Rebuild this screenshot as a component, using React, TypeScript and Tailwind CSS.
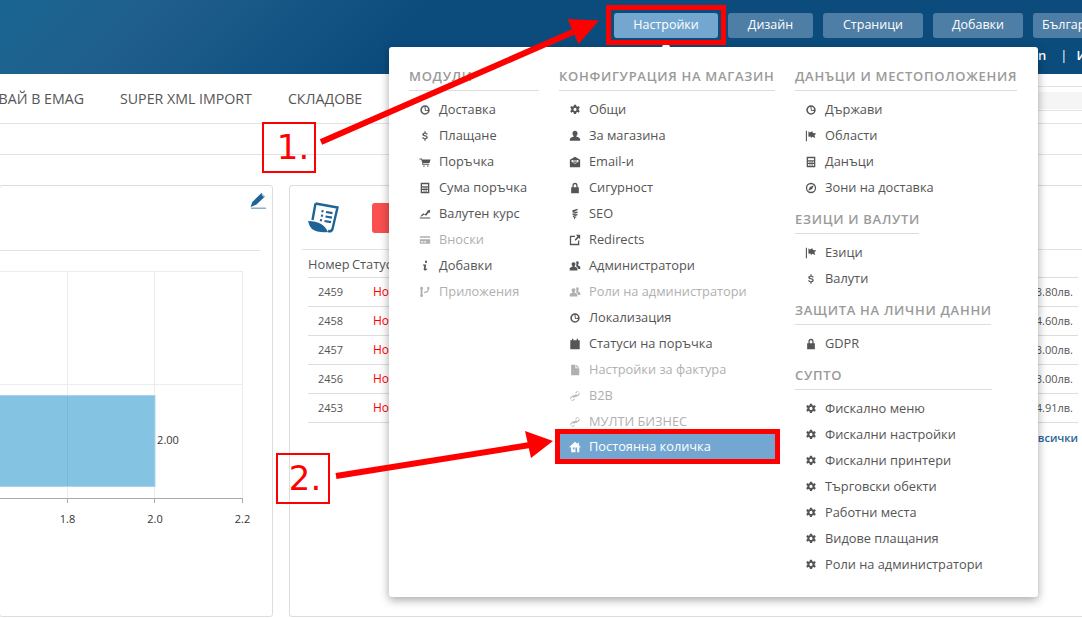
import type { ReactNode } from "react";

// small glyph-like icons, all on a 14x14 box
const icons: Record<string, ReactNode> = {
  globe: (
    <path
      fillRule="evenodd"
      d="M7 1.500a5.500 5.500 0 1 0 0 11 5.500 5.500 0 0 0 0-11zM7.500 3.200a3.800 3.800 0 0 1 3.300 3.200L8 7.500zM6.300 3.300l.7 5 3.700 0A3.800 3.800 0 1 1 6.300 3.300z"
    />
  ),
  dollar: (
    <path d="M3.800 5.200C3.800 3.800 5.100 3.200 6.300 3.100V1.500h1.400v1.600c1.300.1 2.400.7 2.500 2.100H8.700c-.1-.6-.8-.9-1.700-.9-.9 0-1.600.3-1.600.8 0 .6.700.7 1.800 1 1.600.3 3 .8 3 2.500 0 1.500-1.300 2.100-2.500 2.200v1.700H6.300v-1.700C5 10.600 3.800 10 3.700 8.400h1.500c.1.700.8 1.100 1.800 1.100 1 0 1.700-.4 1.700-1s-.7-.8-1.800-1.100C5.300 7.100 3.800 6.800 3.800 5.200z" />
  ),
  cart: (
    <path d="M.500 3h2.800l.4 1.200H13.500l-1.400 4.300H5l-.2.800h7v1H3.500l.5-2L2.500 4H.500z M5 11h1.500v1.500H5z M9.500 11H11v1.500H9.500z" />
  ),
  calc: (
    <path
      fillRule="evenodd"
      d="M2 1h10v12H2zM3.500 2.500v2.500h7V2.500zM3.500 6.500V8h2V6.500zm2.700 0V8h1.600V6.500zm2.500 0V8h1.800V6.500zM3.500 9.300v2h2v-2zm2.700 0v2h1.600v-2zm2.500 0v2h1.800v-2z"
    />
  ),
  chart: <path d="M1 11h12v1.300H1zM1.500 9.500l3.500-3.500 2 1.300 3-3.300-1.200-.6L13 2l-.3 4-1-.9-3.500 4-2.200-1.400-3 2.200z" />,
  card: (
    <path
      fillRule="evenodd"
      d="M1 2.500h12v9H1zM1 4.500v1.500h12V4.500zM2.500 8.500v1.500h2.500V8.500zm3.500 0v1.500h2V8.500z"
    />
  ),
  info: (
    <path d="M7 1h2.300v2.300H7zM4.800 5.300h3.600l-.8 4.700c0 .5.800.4 1.600-.3l.5.700c-1.200 1.400-2.200 1.800-3.200 1.700-1-.2-1.100-1-.9-2l.5-3.500H4.800z" />
  ),
  fork: (
    <path d="M3 1a1.700 1.700 0 0 1 1.100 3v5.800a1.700 1.700 0 1 1-2.200 0V4A1.700 1.700 0 0 1 3 1zM10.500 1a1.700 1.700 0 0 1 1.100 3c0 2.600-2.100 3.600-5.600 4.600V7c2.500-.7 4.200-1.400 4.500-2.900A1.700 1.700 0 0 1 10.500 1z" />
  ),
  gear: (
    <path
      fillRule="evenodd"
      d="M5.800 1h2.400l.4 1.700 1.300.6 1.500-.9 1.200 2-1.300 1.100v1.500l1.300 1.100-1.200 2-1.500-.9-1.300.6L8.200 11.600H5.800l-.4-1.700-1.300-.6-1.500.9-1.200-2 1.300-1.100V5.600L1.400 4.400l1.200-2 1.500.9 1.300-.6zM7 4.500a1.800 1.800 0 1 0 0 3.600 1.800 1.800 0 0 0 0-3.600z"
    />
  ),
  user: (
    <path d="M7 1c1.800 0 2.900 1.200 2.900 3 0 1.300-.6 2.400-1.300 3v1c2.200.5 4.400 1.200 4.400 3.100V12.500H1V11.100c0-1.900 2.200-2.600 4.400-3.100V7C4.700 6.400 4.100 5.300 4.100 4 4.100 2.200 5.200 1 7 1z" />
  ),
  mail: (
    <path
      fillRule="evenodd"
      d="M7 1l6 3.500v8.500H1V4.500zM3 4.800v2L7 9l4-2.200v-2zM4.500 5.300h5v.9h-5zm0 1.400h5v.3L7 8.200 4.500 7z"
    />
  ),
  lock: (
    <path
      fillRule="evenodd"
      d="M7 1A3 3 0 0 1 10 4V6h1.500v7h-9V6H4V4a3 3 0 0 1 3-3zM5.500 4V6h3V4a1.500 1.500 0 0 0-3 0z"
    />
  ),
  seo: <path d="M4 2.500l6-1.500v1.500L5.500 4l4.500.5v1.200L4.500 7l5.500.3v1.200L5 9.800l3.500.2v1l-1.500.4V13H6v-1.800L4.500 10.500V9l2.600-.6L4 8V6.500l3-.8L4 5z" />,
  external: (
    <path d="M1 2H7v1.500H2.500v8h8V7.500H12V13H1zM8 1h5v5l-1.700-1.700L7.800 8 6.500 6.700 9.900 3z" />
  ),
  users: (
    <path d="M5.500 2.500c1.300 0 2 .9 2 2.200 0 1-.4 1.800-1 2.300v.8c1.800.4 3.300 1 3.300 2.400v2H.800v-2c0-1.400 1.500-2 3.200-2.400V7c-.6-.5-1-1.300-1-2.300 0-1.300.9-2.200 2.500-2.200zM9.500 1.500c1.200 0 1.900.8 1.900 2 0 .9-.4 1.600-.9 2.100V6.300c1.500.4 2.700.9 2.700 2.200v2h-2.400C10.300 8.700 9.400 7.800 8.300 7.300c.3-.8.400-1.700.2-2.500.2-.7.300-1.600-.3-2.300.3-.6.800-1 1.300-1z" />
  ),
  clipboard: <path d="M1.500 2.500h2V1h1.500v1.500h4V1h1.500v1.500h2V13h-11z" />,
  file: <path d="M2.500 1h5v4h4.500v8h-9.500zM8.500 1l3.500 3.200H8.500z" />,
  link: (
    <path d="M8.700 1.800a2.700 2.700 0 0 1 3.500 3.500l-1.800 1.800a2.700 2.700 0 0 1-3.600.1l.9-.9c.7.400 1.500.300 2-.2l1.600-1.600a1.400 1.400 0 0 0-2-2L7.800 4l-.4-.9zM5.300 12.200a2.700 2.700 0 0 1-3.500-3.500l1.800-1.800a2.700 2.700 0 0 1 3.600-.1l-.9.9c-.7-.4-1.500-.3-2 .2L2.700 9.500a1.400 1.400 0 0 0 2 2l1.500-1.500.4.900zM4.800 8.300l3.500-3.500.9.9-3.500 3.500z" />
  ),
  home: (
    <path
      fillRule="evenodd"
      d="M7 1l3 2.600V2h1.500v3l2.500 2.300h-2V13H2.500V7.300H0zM4.500 7.500v2.500h2V7.500zm3 0V13h2V7.500z"
    />
  ),
  flag: <path d="M1 1h1.300v12H1zM4 1.500l1.500 1.500L8.500 1.500l.8 2 4 .5-2.300 2.200 1 3-3.500-1.200-1.200 1.200-1-1.500L4 8z" />,
  target: (
    <path
      fillRule="evenodd"
      d="M7 1a6 6 0 1 1 0 12A6 6 0 0 1 7 1zm0 1.500a4.500 4.500 0 1 0 0 9 4.500 4.500 0 0 0 0-9zM10.300 3.700L8.300 8.300 3.700 10.300l2-4.600z"
    />
  ),
};

function Icon({ name }: { name: string }) {
  return (
    <svg viewBox="0 0 14 14" className="h-[12px] w-[12px] fill-current">
      {icons[name]}
    </svg>
  );
}

type Link = { label: string; icon: string; muted?: boolean };

function MenuItem({ label, icon, muted }: Link) {
  return (
    <div className={`flex h-[26px] items-center pl-[10px] ${muted ? "text-[#b0b0b0]" : "text-[#555]"}`}>
      <span className="flex w-[20px] shrink-0">
        <Icon name={icon} />
      </span>
      <span>{label}</span>
    </div>
  );
}

function MenuHeading({ title, width }: { title: string; width: string }) {
  return (
    <div className={`h-[23px] border-b border-[#ddd] text-[13px] leading-[16px] font-semibold tracking-[0.7px] whitespace-nowrap text-[#9a9a9a] ${width}`}>
      {title}
    </div>
  );
}

function MenuSection({ title, width, items, className }: { title: string; width: string; items: Link[]; className?: string }) {
  return (
    <div className={className}>
      <MenuHeading title={title} width={width} />
      <div className="mt-[6px]">
        {items.map((item) => (
          <MenuItem key={item.label} {...item} />
        ))}
      </div>
    </div>
  );
}

const moduleLinks: Link[] = [
  { label: "Доставка", icon: "globe" },
  { label: "Плащане", icon: "dollar" },
  { label: "Поръчка", icon: "cart" },
  { label: "Сума поръчка", icon: "calc" },
  { label: "Валутен курс", icon: "chart" },
  { label: "Вноски", icon: "card", muted: true },
  { label: "Добавки", icon: "info" },
  { label: "Приложения", icon: "fork", muted: true },
];

const shopLinks: Link[] = [
  { label: "Общи", icon: "gear" },
  { label: "За магазина", icon: "user" },
  { label: "Email-и", icon: "mail" },
  { label: "Сигурност", icon: "lock" },
  { label: "SEO", icon: "seo" },
  { label: "Redirects", icon: "external" },
  { label: "Администратори", icon: "users" },
  { label: "Роли на администратори", icon: "users", muted: true },
  { label: "Локализация", icon: "globe" },
  { label: "Статуси на поръчка", icon: "clipboard" },
  { label: "Настройки за фактура", icon: "file", muted: true },
  { label: "B2B", icon: "link", muted: true },
  { label: "МУЛТИ БИЗНЕС", icon: "link", muted: true },
];

const orders = [
  { id: "2459", total: "3.80лв." },
  { id: "2458", total: "4.60лв." },
  { id: "2457", total: "3.00лв." },
  { id: "2456", total: "3.00лв." },
  { id: "2453", total: "4.91лв." },
];

const topButtons = [
  { label: "Дизайн", width: "w-[85px]" },
  { label: "Страници", width: "w-[100px]" },
  { label: "Добавки", width: "w-[90px]" },
];

function BarChart() {
  return (
    <svg viewBox="0 0 272 360" className="h-[360px] w-[272px] text-[11px]">
      <path d="M0 86.500H242.500M0 199.500H242.500M67.500 86V314M154.500 86V314M242.500 86V314" stroke="#ececec" fill="none" />
      <rect x="-2" y="210.500" width="157" height="91" fill="#85c3e3" stroke="#a8d5ec" />
      <path d="M67.500 211V301" stroke="#7ab8d8" />
      <path d="M0 313.500H242.500" stroke="#aaa" fill="none" />
      <path d="M67.500 313V318M154.500 313V318M242.500 313V318" stroke="#aaa" />
      <g fill="#333" fontFamily="'Open Sans', sans-serif" textAnchor="middle">
        <text x="168" y="259">2.00</text>
        <text x="67.500" y="338">1.8</text>
        <text x="155" y="338">2.0</text>
        <text x="242.500" y="338">2.2</text>
      </g>
    </svg>
  );
}

export default function App() {
  return (
    <div className="relative h-[618px] w-[1082px] overflow-hidden bg-white font-['Open_Sans','Noto_Sans',sans-serif] text-[12.8px] text-[#555]">
      {/* top bar */}
      <header className="flex h-[74px] flex-col items-end overflow-hidden bg-[linear-gradient(135deg,#1a6592_0%,#1f5e8c_15%,#0b4c7d_38%,#0b4c7d_100%)] pt-[13px]">
        <div className="flex h-[25px] gap-[10px] text-[12.5px] text-white">
          <button className="w-[104px] rounded-[3px] bg-[#73a7cf]">Настройки</button>
          {topButtons.map((b) => (
            <button key={b.label} className={`${b.width} rounded-[3px] bg-[#4e7ea5]`}>
              {b.label}
            </button>
          ))}
          <button className="w-[49px] overflow-hidden rounded-l-[3px] bg-[#4e7ea5] pl-[9px] text-left whitespace-nowrap">
            Български
          </button>
        </div>
        <div className="mt-[8px] flex w-[44px] overflow-hidden text-[13px] leading-[18px] font-semibold whitespace-nowrap text-white">
          <span>n</span>
          <span className="ml-[14px] font-normal">|</span>
          <span className="ml-[9px]">Изход</span>
        </div>
      </header>

      {/* main nav */}
      <nav className="relative flex h-[50px] items-center gap-[36px] border-b border-[#e3e3e3] text-[14.2px] whitespace-nowrap text-[#555]">
        <span className="-ml-[12px] w-[96px] text-right">ВАЙ В EMAG</span>
        <span>SUPER XML IMPORT</span>
        <span>СКЛАДОВЕ</span>
        <div className="absolute top-[12px] right-0 h-[25px] w-[44px] border-y border-[#e3e3e3] pt-[5px] pb-[1px]">
          <div className="h-full bg-[#f5f5f5]" />
        </div>
      </nav>

      <div className="h-[31px] border-b border-[#e3e3e3]" />

      {/* cards */}
      <main className="flex gap-[16px] pt-[30px]">
        <section className="relative -ml-[1px] h-[432px] w-[274px] shrink-0 rounded-[3px] border border-[#ddd]">
          <div className="absolute top-[64px] right-[12px] left-0 border-b border-[#e3e3e3]" />
          <div className="absolute -top-[1px] left-0">
            <BarChart />
          </div>
          <svg viewBox="0 0 16 16" className="absolute top-[6px] right-[6px] h-[17px] w-[16px] fill-[#1f6496]">
            <path d="M11.500.5l3.500 3.500-8.500 8L.5 14.500l1.800-5zM12 1.500l-.5.5 2.500 2.500.5-.5zM1 15.200h15v.8H1z" />
          </svg>
        </section>

        <section className="flex h-[432px] grow flex-col rounded-l-[3px] border border-r-0 border-[#ddd] pl-[12px]">
          <div className="flex h-[64px] items-center border-b border-[#e3e3e3] pl-[6px]">
            <svg viewBox="0 0 31 31" className="h-[31px] w-[31px]">
              <path d="M7.500 1.500L29.500 5.500L24.500 27Q23.500 30 20 29M7.500 1.500L4.500 18" fill="none" stroke="#1f6496" strokeWidth="2.400" />
              <path d="M0 19Q8 19 13 22Q17 24 20 30Q10 31 4 27Q1 24 0 19Z" fill="#1f6496" />
              <path d="M13.500 9L15.500 9.400M13 13.500L15 13.900M12 18L14 18.400M18 10L24.500 11.200M17.500 14.500L24 15.700M16.500 19L23 20.200" fill="none" stroke="#1f6496" strokeWidth="2.200" />
            </svg>
            <div className="ml-[33px] h-[30px] w-[100px] rounded-[3px] bg-[#fa5050]" />
          </div>
          <div className="mr-[4px] ml-[6px]">
            <div className="flex h-[28px] items-center border-b border-[#ddd] pt-[2px] whitespace-nowrap text-[#555]">
              <span className="w-[44px]">Номер</span>
              <span>Статус</span>
            </div>
            {orders.map((o) => (
              <div key={o.id} className="flex h-[29px] items-center border-b border-[#ddd] text-[11px]">
                <span className="ml-[10px] w-[55px]">{o.id}</span>
                <span className="text-[12px] text-[#f00]">Нова</span>
                <span className="mr-[5px] ml-auto">{o.total}</span>
              </div>
            ))}
            <div className="flex h-[30px] items-center justify-end text-[11px] font-semibold text-[#1f6496]">всички</div>
          </div>
        </section>
      </main>

      {/* dropdown menu */}
      <div className="absolute top-[47px] left-[389px] h-[550px] w-[649px] rounded-[3px] bg-white pt-[21px] pl-[20px] shadow-[0_3px_10px_rgba(0,0,0,0.35)]">
        <div className="absolute -top-[3px] left-[273px] h-[6px] w-[8px] rounded-t-full bg-white" />
        <div className="flex">
          <MenuSection title="МОДУЛИ" width="w-[130px]" items={moduleLinks} className="w-[150px]" />
          <div className="w-[236px]">
            <MenuHeading title="КОНФИГУРАЦИЯ НА МАГАЗИН" width="w-[216px]" />
            <div className="mt-[6px] w-[216px]">
              {shopLinks.map((item) => (
                <MenuItem key={item.label} {...item} />
              ))}
              <div className="-mt-[1px] flex h-[26px] items-center bg-[#73a7d2] pl-[10px] text-white">
                <span className="flex w-[20px] shrink-0">
                  <Icon name="home" />
                </span>
                <span>Постоянна количка</span>
              </div>
            </div>
          </div>
          <div className="w-[222px]">
            <MenuSection
              title="ДАНЪЦИ И МЕСТОПОЛОЖЕНИЯ"
              width="w-[222px]"
              items={[
                { label: "Държави", icon: "globe" },
                { label: "Области", icon: "flag" },
                { label: "Данъци", icon: "calc" },
                { label: "Зони на доставка", icon: "target" },
              ]}
            />
            <MenuSection
              title="ЕЗИЦИ И ВАЛУТИ"
              width="w-[124px]"
              className="mt-[10px]"
              items={[
                { label: "Езици", icon: "flag" },
                { label: "Валути", icon: "dollar" },
              ]}
            />
            <MenuSection
              title="ЗАЩИТА НА ЛИЧНИ ДАННИ"
              width="w-[196px]"
              className="mt-[10px]"
              items={[{ label: "GDPR", icon: "lock" }]}
            />
            <MenuSection
              title="СУПТО"
              width="w-[197px]"
              className="mt-[10px]"
              items={[
                { label: "Фискално меню", icon: "gear" },
                { label: "Фискални настройки", icon: "gear" },
                { label: "Фискални принтери", icon: "gear" },
                { label: "Търговски обекти", icon: "gear" },
                { label: "Работни места", icon: "gear" },
                { label: "Видове плащания", icon: "gear" },
                { label: "Роли на администратори", icon: "gear" },
              ]}
            />
          </div>
        </div>
      </div>

      {/* tutorial annotations over the screenshot */}
      <div className="absolute top-[5px] left-[606px] h-[40px] w-[120px] border-[5px] border-[#f00]" />
      <div className="absolute top-[429px] left-[555px] h-[35px] w-[225px] border-[5px] border-[#f00]" />
      <div className="absolute top-[122px] left-[262px] flex h-[51px] w-[54px] items-center justify-center border-[2px] border-[#f00] pl-[8px] font-['DejaVu_Sans',sans-serif] text-[34px] text-[#f00]">
        1.
      </div>
      <div className="absolute top-[453px] left-[276px] flex h-[51px] w-[54px] items-center justify-center border-[2px] border-[#f00] pl-[4px] font-['DejaVu_Sans',sans-serif] text-[34px] text-[#f00]">
        2.
      </div>
      <svg viewBox="0 0 1082 618" className="pointer-events-none absolute inset-0 h-[618px] w-[1082px]">
        <path d="M321 142L573 32" stroke="#f00" strokeWidth="6" />
        <path d="M599 20.500L567.500 19L578.500 44Z" fill="#f00" />
        <path d="M336 476L530 445" stroke="#f00" strokeWidth="6" />
        <path d="M553 441L525 431L531 458Z" fill="#f00" />
      </svg>
    </div>
  );
}
